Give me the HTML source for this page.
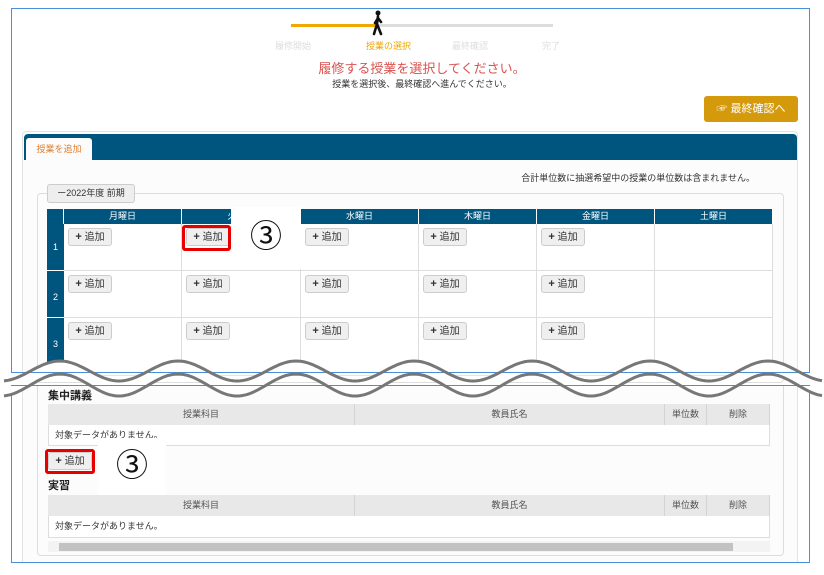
<!DOCTYPE html>
<html><head><meta charset="utf-8"><style>
*{box-sizing:border-box;margin:0;padding:0}
body{width:824px;height:575px;background:#fff;position:relative;overflow:hidden;font-family:"Liberation Sans","Noto Sans CJK JP",sans-serif;color:#333}
.a{position:absolute}
.btn{position:absolute;width:44px;height:18px;background:#efefef;border:1px solid #ccc;border-radius:3px;font-size:10px;line-height:16px;text-align:center;color:#333}
.btn b{font-size:11px}
.th{position:absolute;background:#00557f;color:#fff;font-size:9px;text-align:center;line-height:15px;height:15px;border-right:1px solid #fff}
.cell{position:absolute;border-right:1px solid #ddd;border-bottom:1px solid #ddd;background:#fff}
.per{position:absolute;background:#00557f;color:#fff;font-size:9px;text-align:center;border-bottom:1px solid #fff}
.gh{position:absolute;background:#e8e8e8;border-right:1px solid #d4d4d4;font-size:9px;color:#555;text-align:center;line-height:21px;height:21px}
</style></head><body>
<div class="a" style="left:11px;top:8px;width:799px;height:365px;border:1px solid #4a90d9"></div>
<div class="a" style="left:291px;top:24px;width:262px;height:3px;background:#ddd"></div>
<div class="a" style="left:291px;top:24px;width:86px;height:3px;background:#f0a800"></div>
<svg class="a" style="left:370px;top:10px" width="16" height="26" viewBox="0 0 16 26"><circle cx="8" cy="3" r="2.5" fill="#111"/><path d="M8 6 L7 14 L4 24 M7 14 L11 24 M8 8 L5 13 M8 8 L11 12" stroke="#111" stroke-width="2.6" fill="none" stroke-linecap="round"/></svg>
<div class="a" style="left:275px;top:39px;font-size:9px;color:#ddd">履修開始</div>
<div class="a" style="left:366px;top:39px;font-size:9px;color:#f0a800">授業の選択</div>
<div class="a" style="left:452px;top:39px;font-size:9px;color:#ddd">最終確認</div>
<div class="a" style="left:542px;top:39px;font-size:9px;color:#ddd">完了</div>
<div class="a" style="left:0;width:844px;top:58px;text-align:center;font-size:13px;color:#d9534f">履修する授業を選択してください。</div>
<div class="a" style="left:0;width:844px;top:77px;text-align:center;font-size:9px;color:#333">授業を選択後、最終確認へ進んでください。</div>
<div class="a" style="left:704px;top:96px;width:94px;height:26px;background:#d49a0c;border-radius:3px;color:#fff;font-size:11px;line-height:26px;text-align:center">&#9758; 最終確認へ</div>
<div class="a" style="left:22px;top:131px;width:776px;height:245px;border:1px solid #e4e4e4;border-radius:4px;background:#fcfcfc"></div>
<div class="a" style="left:24px;top:134px;width:773px;height:26px;background:#00557f;border-radius:4px 4px 0 0"></div>
<div class="a" style="left:26px;top:138px;width:66px;height:23px;background:#fcfcfc;border-radius:3px 3px 0 0;font-size:9px;color:#e08030;line-height:22px;text-align:center">授業を追加</div>
<div class="a" style="left:400px;width:355px;top:171px;text-align:right;font-size:9px;color:#333">合計単位数に抽選希望中の授業の単位数は含まれません。</div>
<div class="a" style="left:37px;top:193px;width:747px;height:190px;border:1px solid #ddd;border-radius:4px"></div>
<div class="a" style="left:47px;top:184px;width:88px;height:19px;background:#eee;border:1px solid #ccc;border-radius:3px;font-size:9px;line-height:17px;text-align:center">ー2022年度 前期</div>
<div class="th" style="left:47px;top:209px;width:17px"></div>
<div class="th" style="left:64px;top:209px;width:118px">月曜日</div>
<div class="th" style="left:182px;top:209px;width:119px">火曜日</div>
<div class="th" style="left:301px;top:209px;width:118px">水曜日</div>
<div class="th" style="left:419px;top:209px;width:118px">木曜日</div>
<div class="th" style="left:537px;top:209px;width:118px">金曜日</div>
<div class="th" style="left:655px;top:209px;width:118px">土曜日</div>
<div class="per" style="left:47px;top:224px;width:17px;height:47px;line-height:47px">1</div>
<div class="per" style="left:47px;top:271px;width:17px;height:47px;line-height:52px">2</div>
<div class="per" style="left:47px;top:318px;width:17px;height:55px;line-height:52px">3</div>
<div id="g"></div>
<script>
var xs=[64,182,301,419,537,655],ys=[224,271,318],h='';
ys.forEach(function(y,r){xs.forEach(function(x,c){h+='<div class="cell" style="left:'+x+'px;top:'+y+'px;width:'+(c==1?119:118)+'px;height:'+(r==2?55:47)+'px"></div>';if(c<5)h+='<div class="btn" style="left:'+(x+4)+'px;top:'+(y+4)+'px"><b>+</b> 追加</div>';});});
document.getElementById('g').innerHTML=h;
</script>
<div class="a" style="left:182px;top:225px;width:49px;height:26px;border:3px solid #e60000;border-radius:3px"></div>
<div class="a" style="left:231px;top:207px;width:70px;height:62px;background:#fff;font-size:32px;line-height:58px;text-align:center;color:#111">③</div>
<div class="a" style="left:11px;top:385px;width:799px;height:178px;border:1px solid #4a90d9;background:#fff"></div>
<div class="a" style="left:22px;top:386px;width:776px;height:176px;border-left:1px solid #e4e4e4;border-right:1px solid #e4e4e4;background:#fcfcfc"></div>
<div class="a" style="left:37px;top:386px;width:747px;height:170px;border:1px solid #ddd;border-top:none;border-radius:0 0 4px 4px"></div>
<div class="a" style="left:48px;top:387px;font-size:11px;font-weight:bold;color:#222">集中講義</div>
<div class="gh" style="left:48px;top:404px;width:307px">授業科目</div>
<div class="gh" style="left:355px;top:404px;width:310px">教員氏名</div>
<div class="gh" style="left:665px;top:404px;width:42px">単位数</div>
<div class="gh" style="left:707px;top:404px;width:63px">削除</div>
<div class="a" style="left:48px;top:425px;width:722px;height:21px;background:#fff;border:1px solid #ddd;border-top:none;font-size:9px;line-height:21px;padding-left:6px">対象データがありません。</div>
<div class="btn" style="left:48px;top:452px"><b>+</b> 追加</div>
<div class="a" style="left:45px;top:449px;width:50px;height:25px;border:3px solid #e60000;border-radius:3px"></div>
<div class="a" style="left:98px;top:438px;width:68px;height:59px;background:#fff;font-size:32px;line-height:54px;text-align:center;color:#111">③</div>
<div class="a" style="left:48px;top:477px;font-size:11px;font-weight:bold;color:#222">実習</div>
<div class="gh" style="left:48px;top:495px;width:307px">授業科目</div>
<div class="gh" style="left:355px;top:495px;width:310px">教員氏名</div>
<div class="gh" style="left:665px;top:495px;width:42px">単位数</div>
<div class="gh" style="left:707px;top:495px;width:63px">削除</div>
<div class="a" style="left:48px;top:516px;width:722px;height:22px;background:#fff;border:1px solid #ddd;border-top:none;font-size:9px;line-height:21px;padding-left:6px">対象データがありません。</div>
<div class="a" style="left:48px;top:541px;width:722px;height:11px;background:#f3f3f3"></div>
<div class="a" style="left:59px;top:543px;width:674px;height:8px;background:#c2c2c2"></div>
<svg id="wv" class="a" style="left:0;top:0" width="824" height="575"></svg>
<script>
function wave(c,a){var p=[];for(var x=4;x<=822;x+=2){p.push(x+','+(c-a*Math.cos((x-60)*2*Math.PI/118)).toFixed(1));}return p;}
var t=wave(371,10),b=wave(385,11);
var s='<polygon points="'+t.join(' ')+' '+b.slice().reverse().join(' ')+'" fill="#fff"/>';
s+='<line x1="11" y1="372.5" x2="810" y2="372.5" stroke="#4a90d9"/><line x1="11" y1="385.5" x2="810" y2="385.5" stroke="#4a90d9"/>';
s+='<polyline points="'+t.join(' ')+'" fill="none" stroke="#777" stroke-width="3"/>';
s+='<polyline points="'+b.join(' ')+'" fill="none" stroke="#777" stroke-width="3"/>';
document.getElementById('wv').innerHTML=s;
</script>
</body></html>
